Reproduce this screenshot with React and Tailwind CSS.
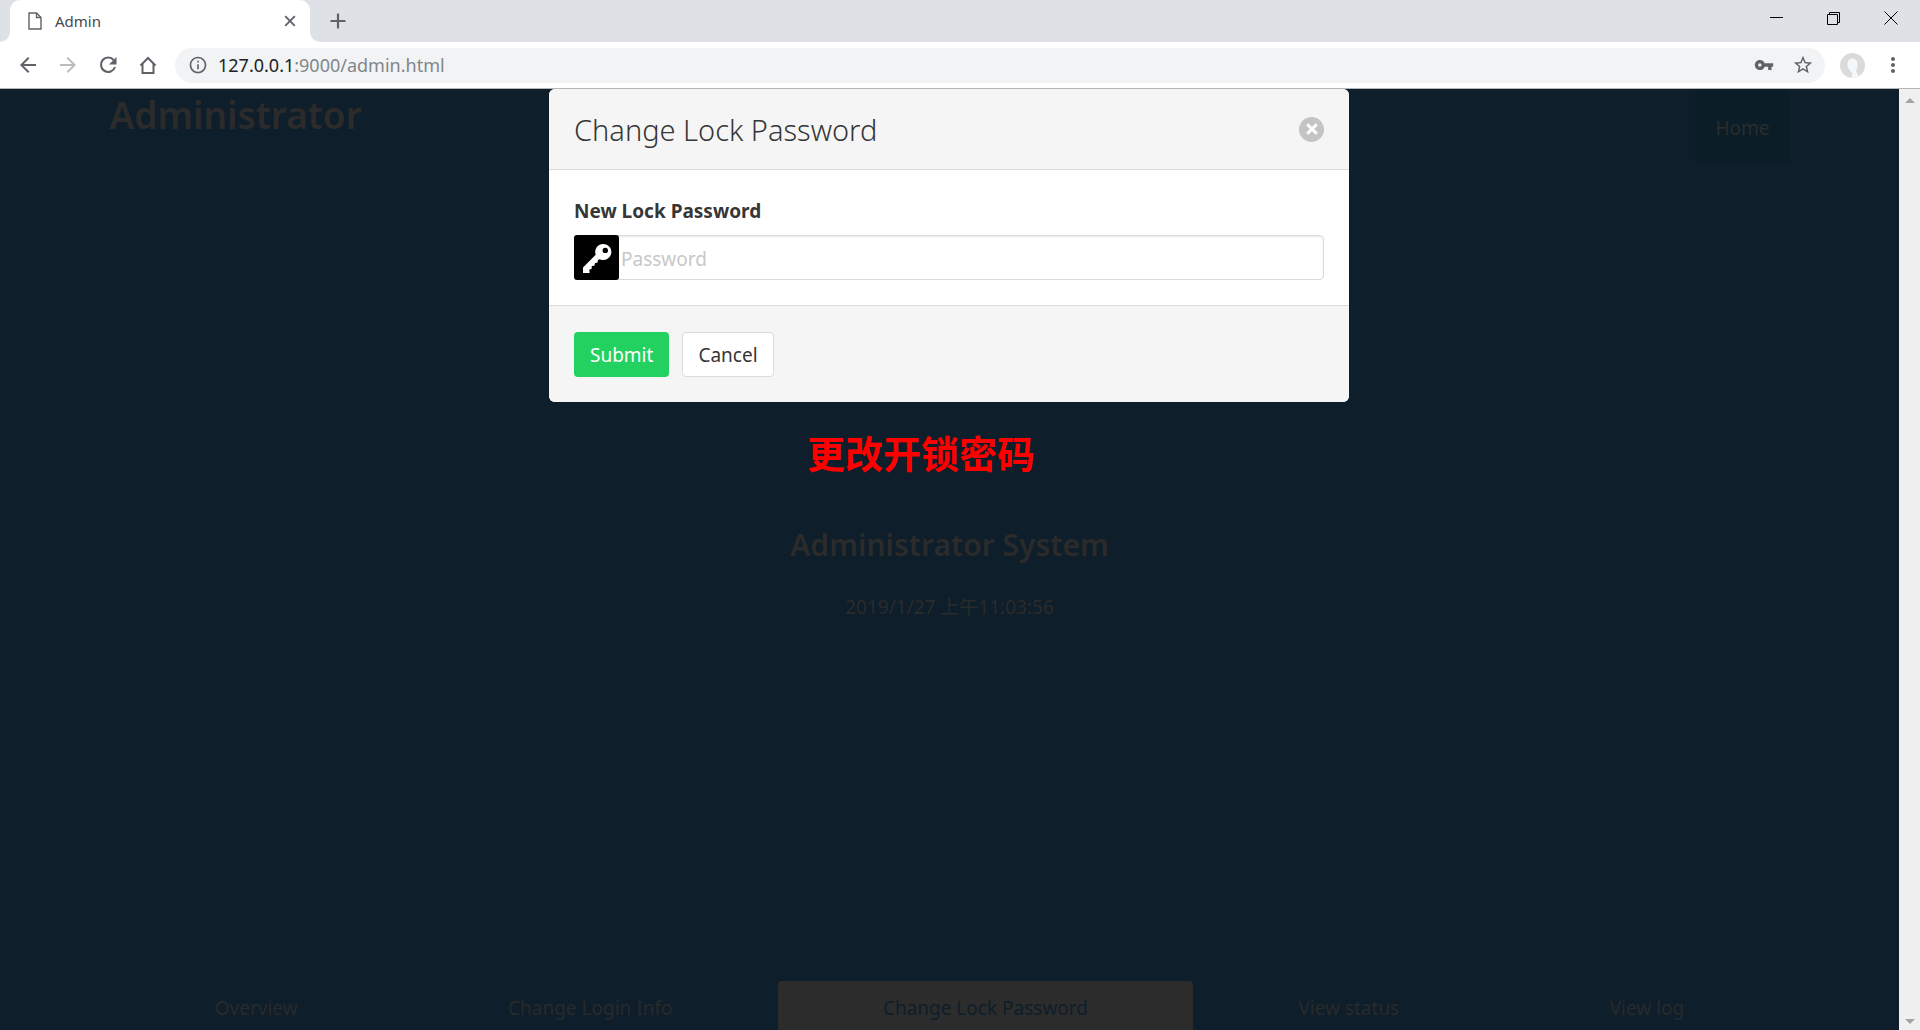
import React from "react";
import {
  MdArrowBack,
  MdArrowForward,
  MdOutlineInfo,
  MdVpnKey,
  MdStarBorder,
  MdMoreVert,
} from "react-icons/md";

const tabs = ["Overview", "Change Login Info", "Change Lock Password", "View status", "View log"];

function TabStrip() {
  return (
    <div className="flex h-[42px] shrink-0 items-stretch bg-[#dee1e6]">
      <div className="w-[10px] bg-white">
        <div className="h-full rounded-br-[10px] bg-[#dee1e6]" />
      </div>
      <div className="flex w-[300px] items-center rounded-t-[10px] bg-white pl-[18px] pr-[14px]">
        <svg className="h-[18px] w-[14px]" viewBox="0 0 14 18" fill="none" stroke="#5f6368" strokeWidth="1.4">
          <path d="M1 1h7.5L13 5.500V17H1z" />
          <path d="M8.500 1v4.500H13" />
        </svg>
        <span className="ml-[13px] flex-1 text-[15px] leading-5 text-[#45494d]">Admin</span>
        <button aria-label="Close tab" className="flex h-5 w-[12px] items-center justify-center">
          <svg className="h-[12px] w-[12px]" viewBox="0 0 12 12" stroke="#5f6368" strokeWidth="1.9">
            <path d="M1.200 1.200l9.600 9.600M10.800 1.200l-9.600 9.600" />
          </svg>
        </button>
      </div>
      <div className="w-[10px] bg-white">
        <div className="h-full rounded-bl-[10px] bg-[#dee1e6]" />
      </div>
      <button aria-label="New tab" className="ml-[10px] flex w-4 items-center justify-center">
        <svg className="h-4 w-4" viewBox="0 0 16 16" stroke="#5f6368" strokeWidth="2.200">
          <path d="M8 .5v15M.5 8h15" />
        </svg>
      </button>
      <div className="flex-1" />
      <div className="flex h-9 gap-[43px] pr-[22px]">
        <button aria-label="Minimize" className="flex items-center">
          <svg className="h-[14px] w-[14px]" viewBox="0 0 14 14" stroke="#000">
            <path d="M0 6.500h13" />
          </svg>
        </button>
        <button aria-label="Restore" className="flex items-center">
          <svg className="h-[14px] w-[14px]" viewBox="0 0 14 14" fill="none" stroke="#000">
            <path d="M.5 3.500h10v10h-10zM2.500 3.500v-2h10v10h-2" />
          </svg>
        </button>
        <button aria-label="Close window" className="flex items-center">
          <svg className="h-[14px] w-[14px]" viewBox="0 0 14 14" stroke="#000">
            <path d="M.5 .5l13 13M13.500 .5l-13 13" />
          </svg>
        </button>
      </div>
    </div>
  );
}

function Toolbar() {
  return (
    <div className="flex h-[47px] shrink-0 items-center border-b border-[#b4b5b6] bg-white pl-4 pr-[15px] text-[#5f6368]">
      <div className="flex gap-4">
        <button aria-label="Back"><MdArrowBack size={24} /></button>
        <button aria-label="Forward" className="text-[#bbbdbf]"><MdArrowForward size={24} /></button>
        <button aria-label="Reload">
          <svg className="h-6 w-6" viewBox="0 0 24 24" fill="none" stroke="currentColor" strokeWidth="2.100">
            <path d="M17.800 7.200A7.200 7.200 0 1 0 19 14" />
            <path d="M20.500 4v7.500H13z" fill="currentColor" stroke="none" />
          </svg>
        </button>
        <button aria-label="Home page">
          <svg className="h-6 w-6" viewBox="0 0 24 24" fill="none" stroke="currentColor" strokeWidth="2">
            <path d="M4.500 12.500L12 5l7.500 7.500M6.500 11v9h11v-9" />
          </svg>
        </button>
      </div>
      <div className="ml-[15px] flex h-[35px] flex-1 items-center rounded-full bg-[#f1f3f4] pl-[13px] pr-[11px]">
        <MdOutlineInfo size={20} />
        <div aria-label="Address" role="textbox" className="ml-[10px] flex-1 text-[18px] leading-6 text-[#80868b]">
          <span className="text-[#202124]">127.0.0.1</span>:9000/admin.html
        </div>
        <button aria-label="Saved passwords"><MdVpnKey size={20} /></button>
        <button aria-label="Bookmark" className="ml-[18px]"><MdStarBorder size={22} /></button>
      </div>
      <button aria-label="Profile" className="ml-[15px] mr-4">
        <svg className="h-[25px] w-[25px]" viewBox="0 0 25 25">
          <circle cx="12.500" cy="12.500" r="12.500" fill="#dadada" />
          <path d="M12.500 5.500c3.600 0 5.300 2.600 5 6.500-.2 3-1.200 4.300-1 6.500.1 1.800 2 2.500 1.500 5a12 12 0 0 1-7 1.300c1.200-1.800 1.500-3.800.5-5.800-2.200-1.500-4-4-4-7 0-4 1.700-6.500 5-6.500z" fill="#f4f8fb" />
        </svg>
      </button>
      <button aria-label="Menu"><MdMoreVert size={24} /></button>
    </div>
  );
}

function PasswordModal() {
  return (
    <div className="absolute inset-0 flex items-start justify-center pr-px">
      <form role="dialog" aria-labelledby="dialog-title" className="w-[800px] overflow-hidden rounded-[6px] bg-white text-[#363636]">
        <header className="flex h-[81px] items-center border-b border-[#dbdbdb] bg-[#f5f5f5] px-[25px]">
          <h2 id="dialog-title" className="flex-1 pt-0.5 text-[29px] font-light leading-8">Change Lock Password</h2>
          <button type="button" aria-label="Close" className="flex h-[25px] w-[25px] items-center justify-center rounded-full bg-[#c4c4c4]">
            <svg className="h-[12px] w-[12px]" viewBox="0 0 12 12" stroke="#fff" strokeWidth="3">
              <path d="M1.200 1.200l9.600 9.600M10.800 1.200l-9.600 9.600" />
            </svg>
          </button>
        </header>
        <div className="px-[25px] pb-[25px] pt-[26px]">
          <label htmlFor="new-password" className="mb-[9px] block text-[19px] font-bold leading-[30px]">New Lock Password</label>
          <div className="relative">
            <input
              id="new-password"
              type="password"
              placeholder="Password"
              className="h-[45px] w-full rounded-[4px] border border-[#dbdbdb] pl-[46px] pr-3 pt-0.5 text-[19px] shadow-[inset_0_1px_2px_rgba(10,10,10,0.1)] placeholder:text-[#c8c8c8]"
            />
            <span className="absolute left-0 top-0 flex h-[45px] w-[45px] items-center justify-center rounded-[3px] bg-black">
              <svg className="h-[30px] w-[30px]" viewBox="0 0 30 30">
                <path fillRule="evenodd" fill="#fff" d="M21.500 1a8 8 0 1 1-3.600 15.200l-1.900.8-.6 2.700-2.300.3-.7 2.700-2.600.3-.2 3-2.300.5.300 3.700H1v-5.700L13.700 11.800A8 8 0 0 1 21.500 1zm1.800 3.700a2.700 2.700 0 1 0 0 5.400 2.700 2.700 0 0 0 0-5.400z" />
              </svg>
            </span>
          </div>
        </div>
        <footer className="flex gap-[13px] border-t border-[#dbdbdb] bg-[#f5f5f5] px-[25px] pb-[25px] pt-[26px]">
          <button type="submit" className="h-[45px] rounded-[4px] bg-[#23d160] px-4 pt-0.5 text-[19px] text-white">Submit</button>
          <button type="button" className="h-[45px] rounded-[4px] border border-[#dbdbdb] bg-white px-[15px] pt-0.5 text-[19px]">Cancel</button>
        </footer>
      </form>
    </div>
  );
}

function AdminPage() {
  return (
    <main className="relative flex flex-1 flex-col overflow-hidden bg-[#0e1e2a] text-[19px] text-[#2b2b2b]">
      <header className="mx-auto flex w-full max-w-[1680px] items-start justify-between">
        <h1 className="text-[37px] font-semibold leading-[52px]">Administrator</h1>
        <a href="#home" className="flex h-[75px] items-center bg-[#0b1e28] px-5 pt-1">Home</a>
      </header>
      <section className="flex flex-1 flex-col items-center justify-center text-center">
        <h2 className="text-[30px] font-semibold leading-10">Administrator System</h2>
        <p className="mt-7 leading-7">2019/1/27 上午11:03:56</p>
      </section>
      <nav className="mx-auto w-full max-w-[1680px]">
        <ul className="flex">
          {tabs.map((tab) => (
            <li key={tab} className="flex-auto">
              <a
                href="#tab"
                className={
                  tab === "Change Lock Password"
                    ? "flex h-[49px] items-center justify-center rounded-t-[4px] bg-[#2c2c2c] pt-[5px] text-[#0e1e2a]"
                    : "flex h-[49px] items-center justify-center pt-[5px] text-[#282a2b]"
                }
              >
                {tab}
              </a>
            </li>
          ))}
        </ul>
      </nav>
      <PasswordModal />
      <p className="absolute left-[807px] top-[338px] text-[38px] font-bold leading-[52px] text-[#ff0000]">更改开锁密码</p>
    </main>
  );
}

export default function App() {
  return (
    <div className="flex h-screen flex-col overflow-hidden font-['Noto_Sans','Noto_Sans_CJK_SC',sans-serif]">
      <TabStrip />
      <Toolbar />
      <div className="flex min-h-0 flex-1">
        <AdminPage />
        <div className="flex w-[21px] flex-col items-center justify-between bg-[#f0f0f0] pb-[6px] pt-[9px] text-[#a3a3a3]">
          <svg className="h-[5px] w-[10px]" viewBox="0 0 10 5" fill="currentColor"><path d="M0 5l5-5 5 5z" /></svg>
          <svg className="h-[5px] w-[10px]" viewBox="0 0 10 5" fill="currentColor"><path d="M0 0h10L5 5z" /></svg>
        </div>
      </div>
    </div>
  );
}
